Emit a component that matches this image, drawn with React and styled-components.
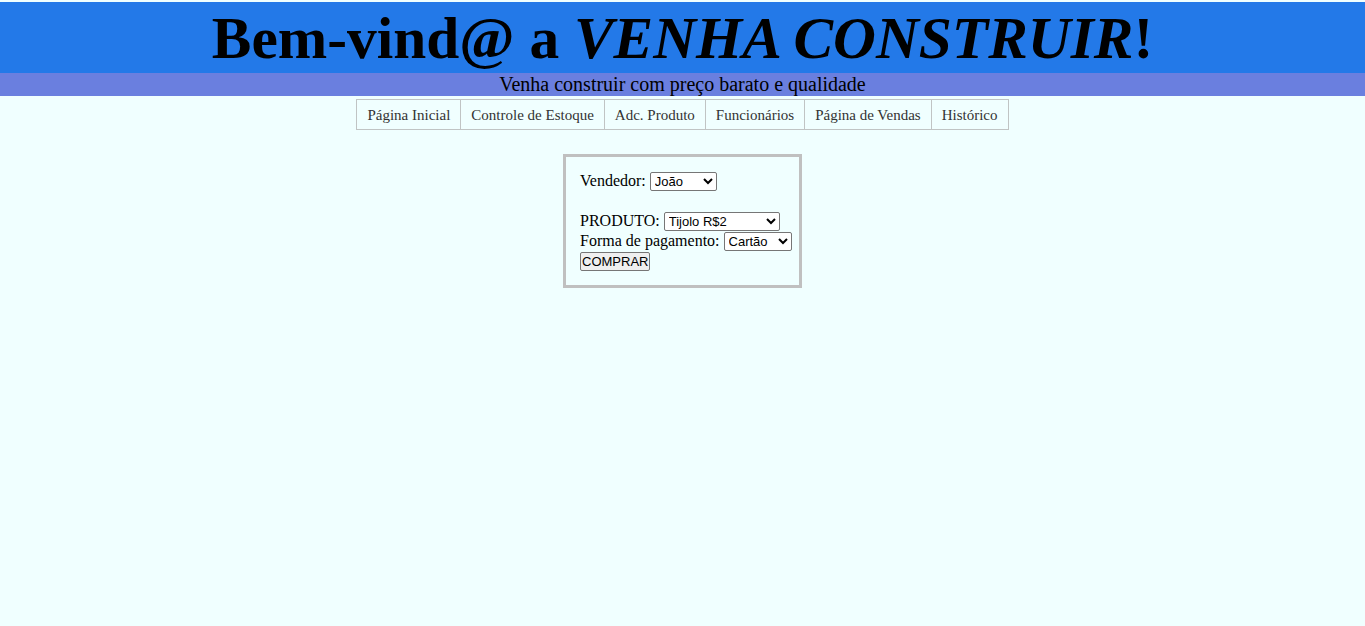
import React from 'react';
import styled, { createGlobalStyle } from 'styled-components';

const GlobalStyle = createGlobalStyle`
  body {
    margin: 0;
    padding-top: 2px;
    background-color: azure;
    font-family: "Liberation Serif", "Times New Roman", serif;
    color: black;
  }
`

const Header = styled.header`
  background-color: #2379e8;
  height: 71px;
  display: flex;
  align-items: center;
  justify-content: center;
`

const Title = styled.h1`
  margin: 0;
  font-size: 59.4px;
  font-weight: bold;
  line-height: 1;
  padding-top: 2px;
`

const SubBar = styled.div`
  background-color: #6a7fdf;
  height: 23px;
  font-size: 20px;
  line-height: 23px;
  text-align: center;
`

const Nav = styled.nav`
  display: flex;
  justify-content: center;
  margin-top: 3px;
`

const NavList = styled.ul`
  display: flex;
  list-style: none;
  margin: 0;
  padding: 0;
  border: 1px solid #c0c4c4;
`

const NavItem = styled.li`
  padding: 0 10px;
  height: 29px;
  line-height: 30px;
  font-size: 15px;
  color: #333;
  border-left: ${p => (p.first ? 'none' : '1px solid #c0c4c4')};
`

const Main = styled.main`
  display: flex;
  justify-content: center;
  margin-top: 24px;
`

const Box = styled.form`
  border: 3px solid #c0c0c0;
  width: 205px;
  padding: 14px;
  font-size: 16px;
  white-space: nowrap;
`

const Row = styled.div`
  line-height: 20px;
  margin-bottom: ${p => (p.gap ? '20px' : '0')};
`

const Select = styled.select`
  font-family: Arial, "Liberation Sans", sans-serif;
  font-size: 13px;
  height: 19px;
  width: ${p => p.w}px;
  padding: 0;
  border: 1px solid #767676;
  border-radius: 2px;
  background: white;
`

const Button = styled.button`
  font-family: Arial, "Liberation Sans", sans-serif;
  font-size: 13px;
  height: 19px;
  padding: 0 1px;
  border: 1px solid #767676;
  border-radius: 2px;
  background: #efefef;
`

const links = ['Página Inicial', 'Controle de Estoque', 'Adc. Produto', 'Funcionários', 'Página de Vendas', 'Histórico']

export default function App() {
  return (
    <>
      <GlobalStyle />
      <Header>
        <Title>Bem-vind@ a <i>VENHA CONSTRUIR</i>!</Title>
      </Header>
      <SubBar>Venha construir com preço barato e qualidade</SubBar>
      <Nav>
        <NavList>
          {links.map((l, i) => (
            <NavItem key={l} first={i === 0}>{l}</NavItem>
          ))}
        </NavList>
      </Nav>
      <Main>
        <Box>
          <Row gap>
            Vendedor: <Select w={67}><option>João</option><option>Maria</option></Select>
          </Row>
          <Row>
            PRODUTO: <Select w={116}><option>Tijolo R$2</option><option>Cimento R$30</option></Select>
          </Row>
          <Row>
            Forma de pagamento: <Select w={68}><option>Cartão</option><option>Dinheiro</option></Select>
          </Row>
          <Row>
            <Button type="button">COMPRAR</Button>
          </Row>
        </Box>
      </Main>
    </>
  )
}
